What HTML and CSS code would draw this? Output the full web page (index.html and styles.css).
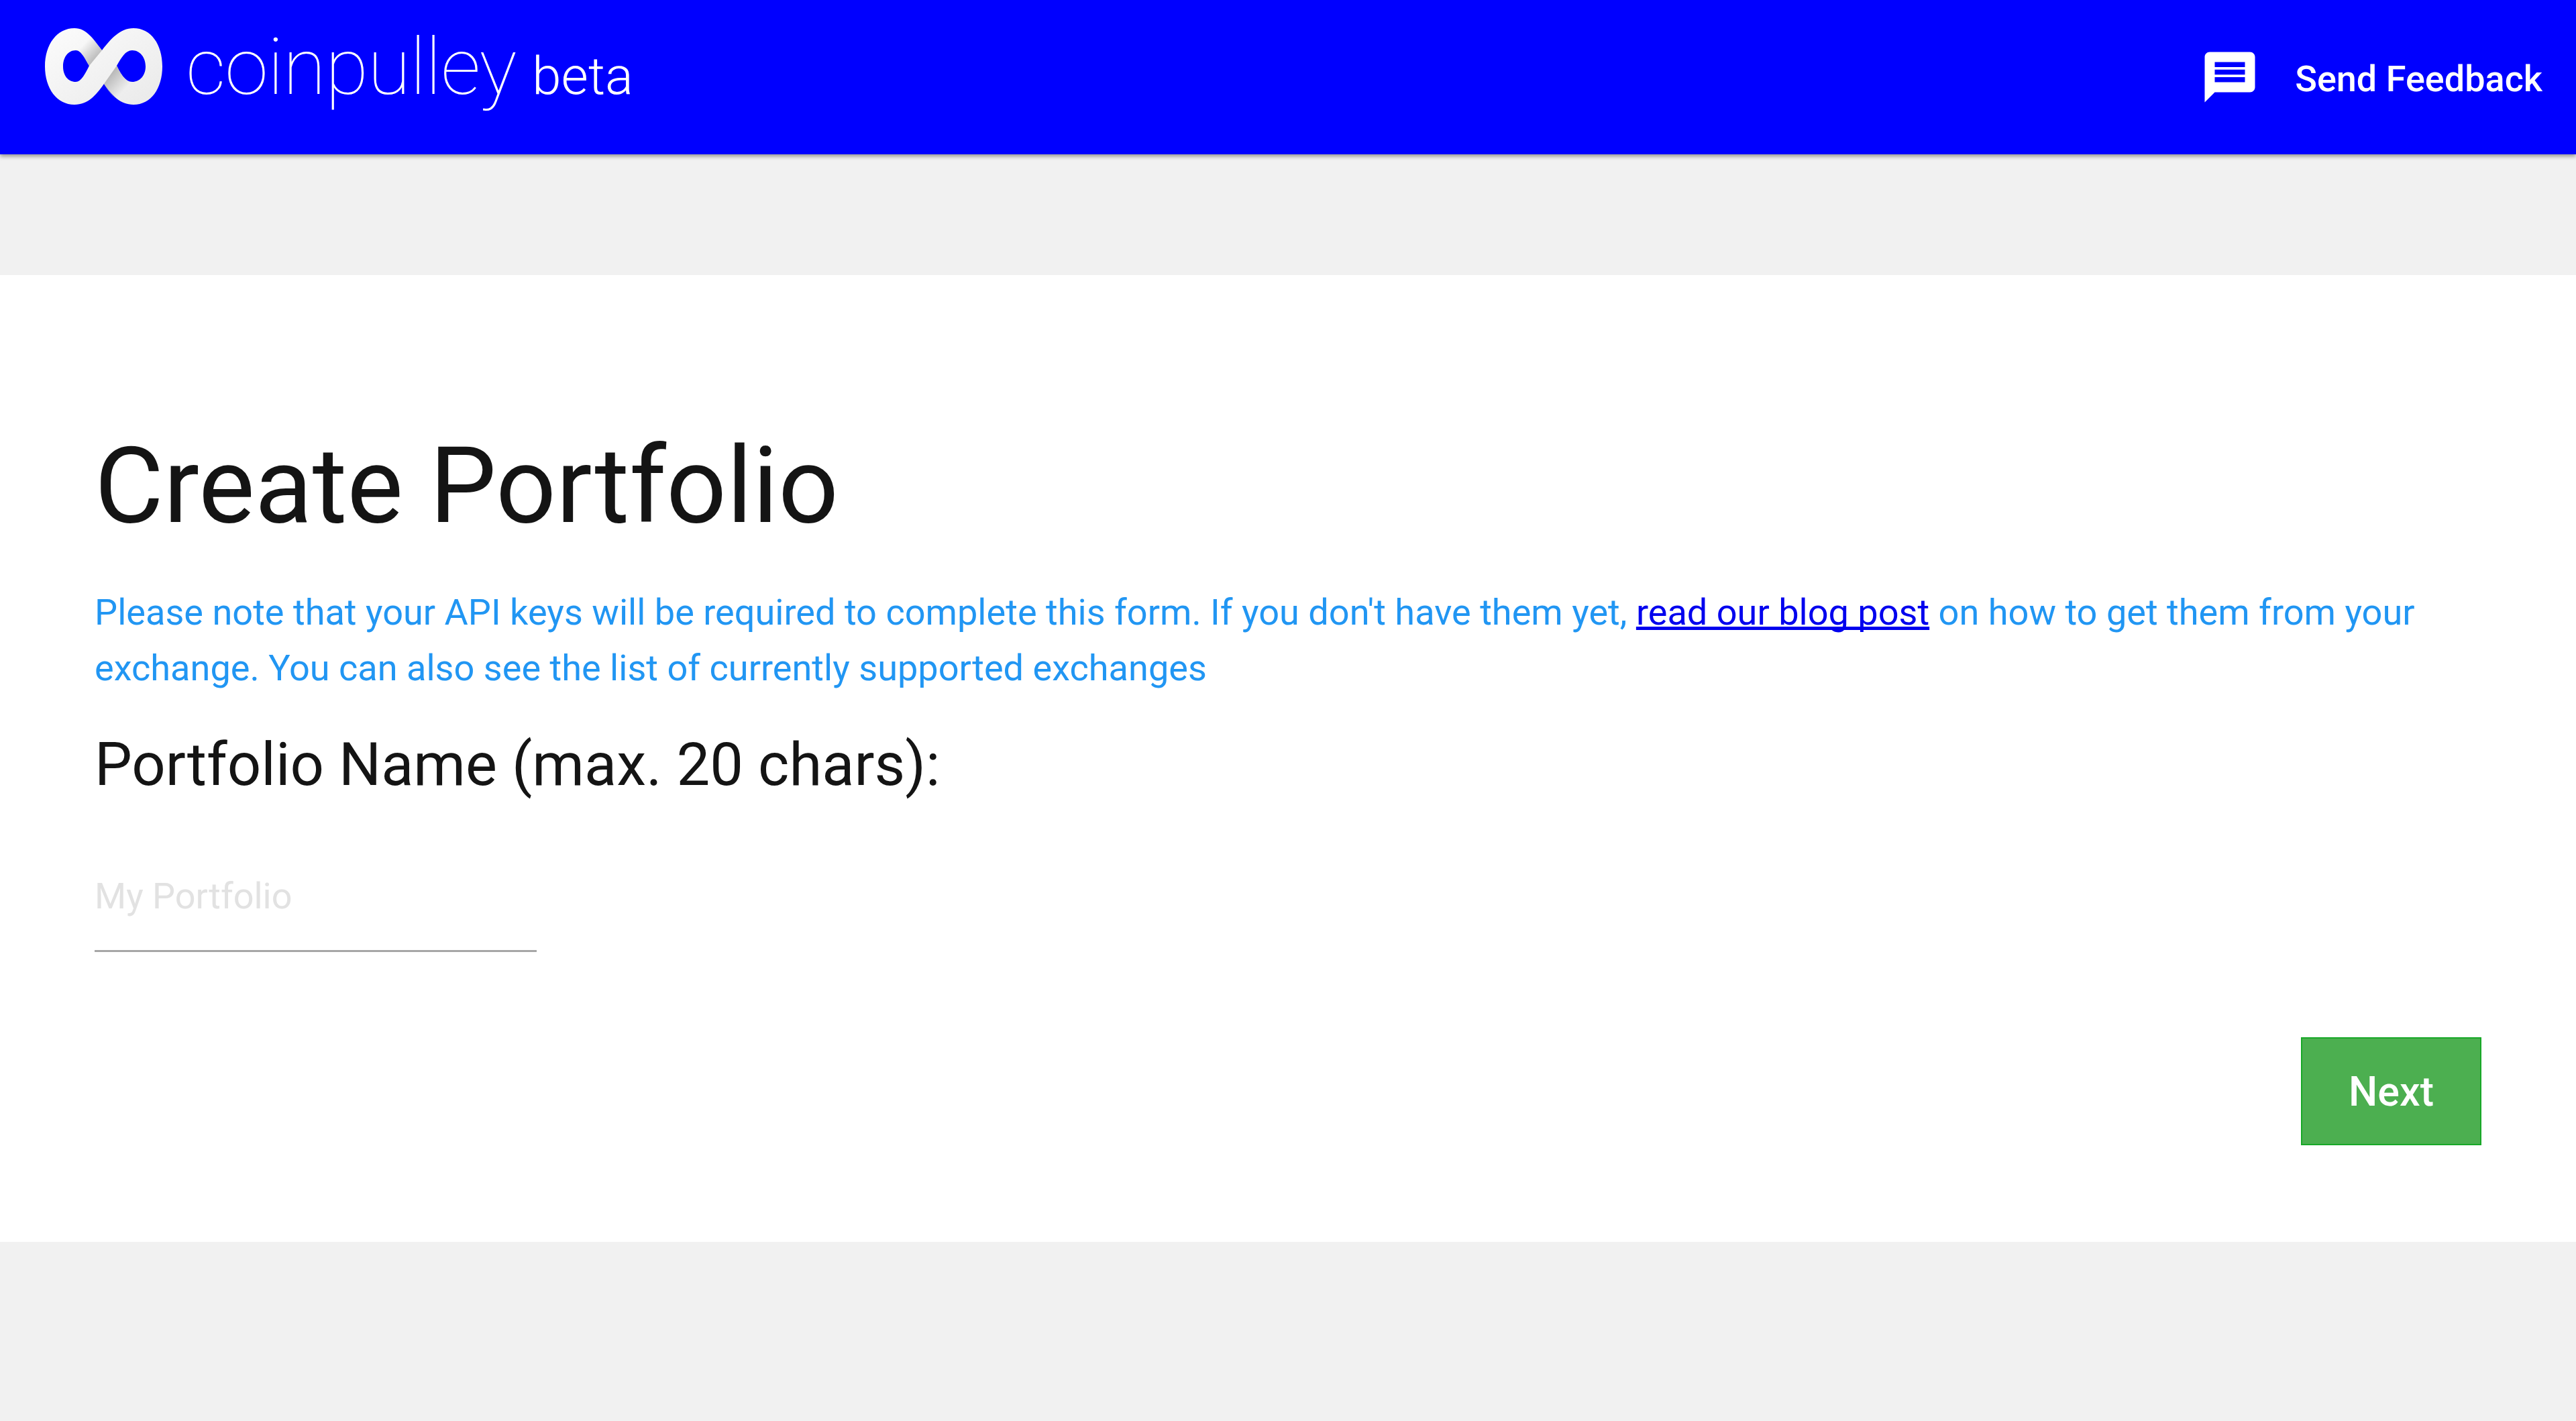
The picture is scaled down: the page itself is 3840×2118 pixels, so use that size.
FILE: index.html
```html
<!DOCTYPE html>
<html lang="en">
<head>
<meta charset="utf-8">
<title>coinpulley beta</title>
<link rel="stylesheet" href="styles.css">
</head>
<body>
<header class="topbar">
  <div class="brand">
    <svg class="logo" viewBox="0 0 176 114" aria-hidden="true">
      <defs>
        <linearGradient id="face" x1="0" y1="0" x2="1" y2="1">
          <stop offset="0" stop-color="#fcfcfc"/>
          <stop offset="1" stop-color="#e9e9e9"/>
        </linearGradient>
        <linearGradient id="shadeA" gradientUnits="userSpaceOnUse" x1="76" y1="45" x2="56" y2="26">
          <stop offset="0" stop-color="#bcbcbc"/>
          <stop offset="1" stop-color="#bcbcbc" stop-opacity="0"/>
        </linearGradient>
        <linearGradient id="shadeB" gradientUnits="userSpaceOnUse" x1="97" y1="69" x2="120" y2="90">
          <stop offset="0" stop-color="#b8b8b8"/>
          <stop offset="1" stop-color="#b8b8b8" stop-opacity="0"/>
        </linearGradient>
      </defs>
      <path fill="url(#face)" fill-rule="evenodd" d="M44 0C62 0 72 16 85 33C98 16 112 0 132 0C158 0 175 24 175 57C175 90 158 114 132 114C112 114 100 100 88 83C76 100 64 114 44 114C18 114 0 90 0 57C0 24 18 0 44 0ZM46 33C34 33 27 44 27 57C27 70 34 80 46 80C54 80 60 68 66 56C60 46 54 33 46 33ZM130 33C120 33 114 44 107 56C113 68 120 80 130 80C142 80 150 70 150 57C150 44 142 33 130 33Z"/>
      <path fill="url(#shadeA)" d="M85 33L66 56C60 46 54 33 46 33L50 2C64 4 74 18 85 33Z"/>
      <path fill="url(#shadeB)" d="M107 56L88 83C96 96 104 108 118 112L126 80C118 78 112 66 107 56Z"/>
    </svg>
    <span class="wordmark">coinpulley</span>
    <span class="beta">beta</span>
  </div>
  <a class="feedback" href="#">
    <svg class="feedback-icon" viewBox="0 0 24 24" aria-hidden="true"><path fill="#fff" d="M20 2H4c-1.1 0-1.99.9-1.99 2L2 22l4-4h14c1.1 0 2-.9 2-2V4c0-1.1-.9-2-2-2zm-2 12H6v-2h12v2zm0-3H6V9h12v2zm0-3H6V6h12v2z"/></svg>
    <span>Send Feedback</span>
  </a>
</header>
<main class="card">
  <h1 class="title">Create Portfolio</h1>
  <p class="note">Please note that your API keys will be required to complete this form. If you don't have them yet, <a class="note-link" href="#">read our blog post</a> on how to get them from your exchange. You can also see the list of currently supported exchanges</p>
  <label class="field-label" for="name">Portfolio Name (max. 20 chars):</label>
  <input class="field-input" id="name" type="text" placeholder="My Portfolio">
  <div class="actions"><button class="next" type="button">Next</button></div>
</main>
</body>
</html>
```
FILE: styles.css
```css
* { box-sizing: border-box; }
html, body { margin: 0; padding: 0; }
body {
  height: 2118px;
  background: #f1f1f1;
  font-family: Roboto, "Liberation Sans", sans-serif;
  overflow: hidden;
}
.topbar {
  height: 230px;
  background: #0000ff;
  box-shadow: 0 3px 6px rgba(0,0,0,.4);
  display: flex;
  justify-content: space-between;
  align-items: flex-start;
  padding: 0 50px 0 67px;
  color: #fff;
}
.brand { display: flex; align-items: baseline; height: 230px; }
.logo { width: 176px; height: 114px; align-self: flex-start; margin-top: 42px; flex: none; }
.wordmark {
  font-weight: 100;
  font-size: 117px;
  line-height: 201px;
  margin-left: 34px;
  letter-spacing: -1px;
}
.beta { font-weight: 300; font-size: 78px; margin-left: 24px; }
.feedback {
  display: flex;
  align-items: center;
  gap: 52px;
  color: #fff;
  text-decoration: none;
  font-size: 54px;
  font-weight: 500;
  margin-top: 70px;
  height: 90px;
}
.feedback span { padding-top: 4px; }
.feedback-icon { width: 90px; height: 90px; margin-left: -8px; }
.card {
  margin-top: 180px;
  height: 1441px;
  background: #fff;
  padding: 224px 141px 0;
  display: flex;
  flex-direction: column;
  align-items: flex-start;
}
.title {
  margin: 0;
  font-weight: 400;
  font-size: 158px;
  line-height: 180px;
  color: #141414;
}
.note {
  margin: 57px 0 0;
  font-size: 54.1px;
  line-height: 83px;
  color: #2196f3;
}
.note-link { color: #0000ee; text-decoration: underline; text-decoration-skip-ink: none; }
.field-label {
  margin-top: 50px;
  font-size: 88.6px;
  line-height: 106px;
  color: #141414;
}
.field-input {
  margin-top: 61px;
  width: 659px;
  height: 165px;
  border: 0;
  border-bottom: 3px solid #a6a6a6;
  padding: 0;
  font: 400 54px Roboto, sans-serif;
  background: transparent;
  outline: none;
}
.field-input::placeholder { color: #e2e2e2; opacity: 1; }
.actions { align-self: stretch; display: flex; justify-content: flex-end; margin-top: 127px; }
.next {
  width: 269px;
  height: 161px;
  background: #4caf50;
  border: 2px solid #17a827;
  border-radius: 0;
  color: #fff;
  font: 500 61px Roboto, sans-serif;
  padding: 0;
}
```
